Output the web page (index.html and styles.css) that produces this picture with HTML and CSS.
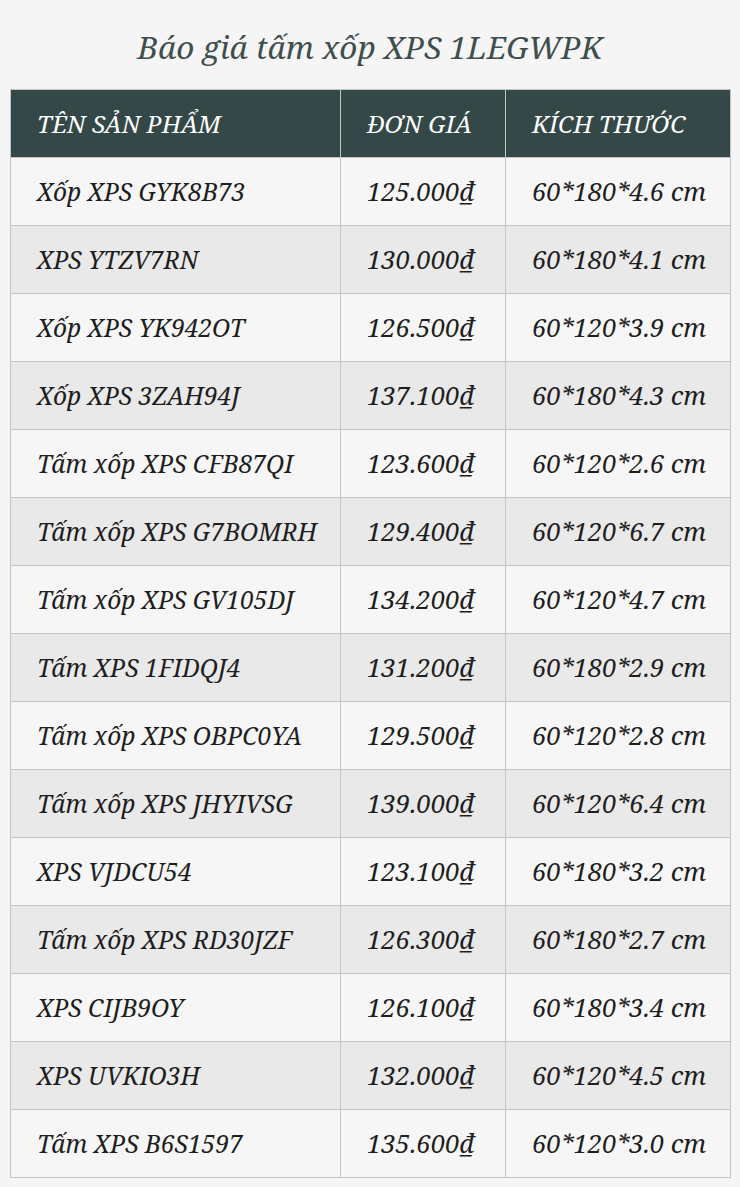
FILE: index.html
```html
<!DOCTYPE html>
<html lang="vi">
<head>
<meta charset="utf-8">
<title>Báo giá tấm xốp XPS 1LEGWPK</title>
<link rel="stylesheet" href="styles.css">
</head>
<body>
<main class="page">
  <h1 class="title">Báo giá tấm xốp XPS 1LEGWPK</h1>
  <table class="price-table">
    <thead>
      <tr><th class="c-name">TÊN SẢN PHẨM</th><th class="c-price">ĐƠN GIÁ</th><th class="c-size">KÍCH THƯỚC</th></tr>
    </thead>
    <tbody>
      <tr><td>Xốp XPS GYK8B73</td><td>125.000₫</td><td>60*180*4.6 cm</td></tr>
      <tr><td>XPS YTZV7RN</td><td>130.000₫</td><td>60*180*4.1 cm</td></tr>
      <tr><td>Xốp XPS YK942OT</td><td>126.500₫</td><td>60*120*3.9 cm</td></tr>
      <tr><td>Xốp XPS 3ZAH94J</td><td>137.100₫</td><td>60*180*4.3 cm</td></tr>
      <tr><td>Tấm xốp XPS CFB87QI</td><td>123.600₫</td><td>60*120*2.6 cm</td></tr>
      <tr><td>Tấm xốp XPS G7BOMRH</td><td>129.400₫</td><td>60*120*6.7 cm</td></tr>
      <tr><td>Tấm xốp XPS GV105DJ</td><td>134.200₫</td><td>60*120*4.7 cm</td></tr>
      <tr><td>Tấm XPS 1FIDQJ4</td><td>131.200₫</td><td>60*180*2.9 cm</td></tr>
      <tr><td>Tấm xốp XPS OBPC0YA</td><td>129.500₫</td><td>60*120*2.8 cm</td></tr>
      <tr><td>Tấm xốp XPS JHYIVSG</td><td>139.000₫</td><td>60*120*6.4 cm</td></tr>
      <tr><td>XPS VJDCU54</td><td>123.100₫</td><td>60*180*3.2 cm</td></tr>
      <tr><td>Tấm xốp XPS RD30JZF</td><td>126.300₫</td><td>60*180*2.7 cm</td></tr>
      <tr><td>XPS CIJB9OY</td><td>126.100₫</td><td>60*180*3.4 cm</td></tr>
      <tr><td>XPS UVKIO3H</td><td>132.000₫</td><td>60*120*4.5 cm</td></tr>
      <tr><td>Tấm XPS B6S1597</td><td>135.600₫</td><td>60*120*3.0 cm</td></tr>
    </tbody>
  </table>
</main>
</body>
</html>
```
FILE: styles.css
```css
html, body {
  margin: 0;
  padding: 0;
  background: #f5f5f5;
}
body {
  font-family: "Noto Serif", "DejaVu Serif", serif;
  font-style: italic;
  color: #1e1e1e;
}
.page {
  padding: 0 10px 10px 10px;
}
.title {
  margin: 0;
  padding: 25px 0 21px 0;
  text-align: center;
  font-weight: normal;
  font-size: 31.5px;
  line-height: 43px;
  color: #3e4f4d;
}
.price-table {
  width: 720px;
  border-collapse: collapse;
  table-layout: fixed;
}
.c-name { width: 330px; }
.c-price { width: 165px; }
.c-size { width: 225px; }
.price-table th,
.price-table td {
  border: 1px solid #c4c4c4;
  height: 68px;
  padding: 0 0 0 26px;
  text-align: left;
  font-size: 25.6px;
  font-weight: normal;
  box-sizing: border-box;
}
.price-table th {
  background: #354848;
  color: #ffffff;
  font-size: 24.3px;
}
.price-table td:first-child {
  font-size: 24.5px;
}
.price-table tbody tr:nth-child(odd) td { background: #f6f6f6; }
.price-table tbody tr:nth-child(even) td { background: #e9e9e9; }
```
